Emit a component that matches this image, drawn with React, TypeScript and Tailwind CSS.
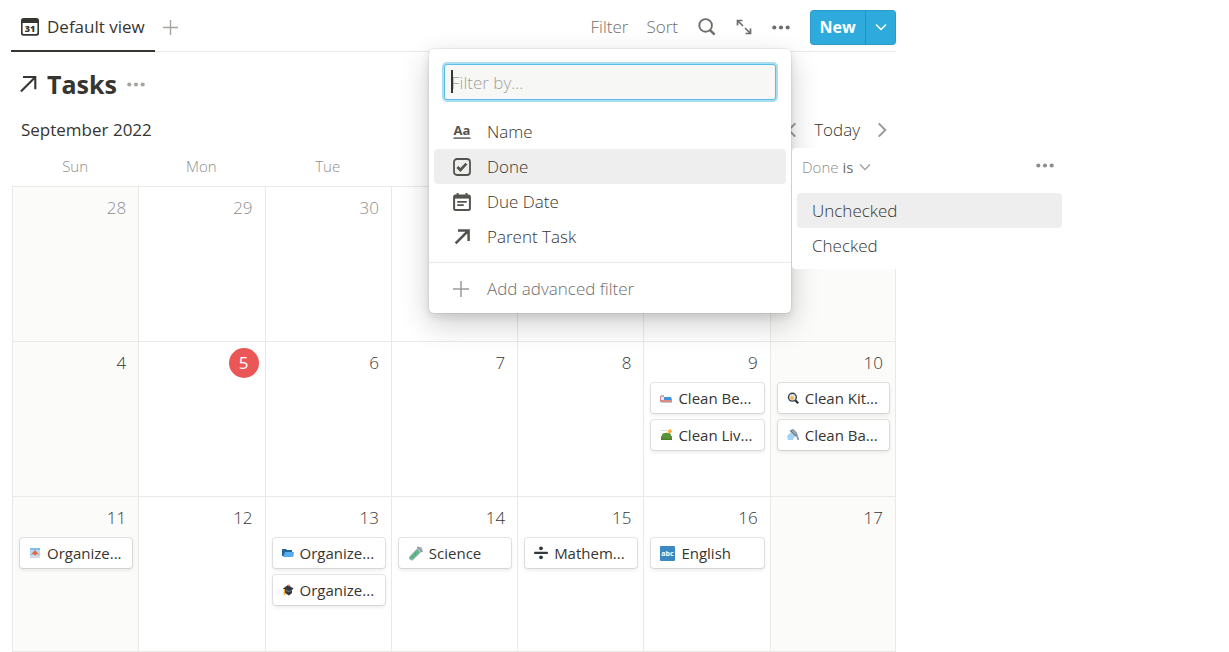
import React, { useState } from "react";

type IconProps = { className?: string };

const Dots: React.FC<IconProps> = ({ className }) => (
  <svg viewBox="0 0 18 5" className={className} fill="currentColor">
    <circle cx="2.3" cy="2.5" r="2.1" />
    <circle cx="9" cy="2.5" r="2.1" />
    <circle cx="15.7" cy="2.5" r="2.1" />
  </svg>
);

const Plus: React.FC<IconProps> = ({ className }) => (
  <svg viewBox="0 0 16 16" className={className} stroke="currentColor" strokeWidth="1.5">
    <path d="M8 0v16M0 8h16" />
  </svg>
);

const Chevron: React.FC<IconProps> = ({ className }) => (
  <svg viewBox="0 0 12 12" className={className} fill="none" stroke="currentColor" strokeWidth="1.5">
    <path d="M1 3.5l5 5 5-5" />
  </svg>
);

const Arrow: React.FC<IconProps> = ({ className }) => (
  <svg viewBox="0 0 18 18" className={className} fill="none" stroke="currentColor" strokeWidth="2.1">
    <path d="M3 2h12.300v12.300M14.900 2.400L.9 16.400" />
  </svg>
);

const RelationIcon: React.FC<IconProps> = ({ className }) => (
  <svg viewBox="0 0 18 18" className={className} fill="none" stroke="currentColor" strokeWidth="2.500">
    <path d="M5 2.400h10.600V13M15 3L2.600 15.400" />
  </svg>
);

const CalendarIcon: React.FC<IconProps> = ({ className }) => (
  <svg viewBox="0 0 18 18" className={className}>
    <path
      fill="currentColor"
      fillRule="evenodd"
      d="M2.500 0h13A2.500 2.500 0 0 1 18 2.500v12.700a2.500 2.500 0 0 1-2.500 2.500h-13A2.500 2.500 0 0 1 0 15.200V2.500A2.500 2.500 0 0 1 2.500 0zM1.600 5v9.600c0 .9.600 1.500 1.500 1.500h11.800c.9 0 1.500-.6 1.500-1.500V5z"
    />
    <text x="9" y="13.600" textAnchor="middle" fontSize="9" fontWeight="800" fill="currentColor">
      31
    </text>
  </svg>
);

const SearchIcon: React.FC<IconProps> = ({ className }) => (
  <svg viewBox="0 0 18 18" className={className} fill="none" stroke="currentColor">
    <circle cx="7.6" cy="7.400" r="6.300" strokeWidth="1.9" />
    <path d="M11.800 11.800l4.800 4.800" strokeWidth="2.400" />
  </svg>
);

const ExpandIcon: React.FC<IconProps> = ({ className }) => (
  <svg viewBox="0 0 16 16" className={className} fill="none" stroke="currentColor" strokeWidth="1.700">
    <path d="M1.500 6.500v-5h5M1.500 1.500L7 7M14.500 9.500v5h-5M14.500 14.500L9 9" />
  </svg>
);

const TitleIcon: React.FC<IconProps> = ({ className }) => (
  <svg viewBox="0 0 18 18" className={`overflow-visible ${className}`} fill="currentColor">
    <text x="9" y="12.400" textAnchor="middle" fontSize="13" fontWeight="700">
      Aa
    </text>
    <path d="M.5 14.400h17v1.400H.5z" />
  </svg>
);

const CheckboxIcon: React.FC<IconProps> = ({ className }) => (
  <svg viewBox="0 0 18 18" className={className} fill="none" stroke="currentColor">
    <rect x="1" y="1" width="16" height="16" rx="3" strokeWidth="1.800" />
    <path d="M4.400 9l3 3 6-6.400" strokeWidth="2.700" />
  </svg>
);

const DateIcon: React.FC<IconProps> = ({ className }) => (
  <svg viewBox="0 0 18 18" className={className} fill="none" stroke="currentColor">
    <rect x="1.100" y="2.400" width="15.800" height="14.600" rx="1.500" strokeWidth="2" />
    <path d="M1 3.800h16" strokeWidth="3.600" />
    <path d="M4.600 0v3M13.400 0v3" strokeWidth="2" />
    <path d="M4.200 8.800h9.600M4.200 12.200h6.600" strokeWidth="1.700" />
  </svg>
);

const emojis: Record<string, React.ReactNode> = {
  bed: (
    <svg viewBox="0 0 12 12" className="size-3">
      <path fill="#a9b8c4" d="M1 3h3v2H1z" />
      <path fill="#d98b84" d="M0 4h1v6H0zM1 8h11v2H1z" />
      <path fill="#e4e9ee" d="M1 5h4v3H1z" />
      <path fill="#3f93dc" d="M4 5h7l1 3H4z" />
      <path fill="#b0bcc8" d="M1 10h11v.8H1z" />
    </svg>
  ),
  couch: (
    <svg viewBox="0 0 12 12" className="size-3">
      <path fill="#cfe0ea" d="M1 1h6v1H1z" />
      <circle cx="9.800" cy="2.200" r="2" fill="#ffac33" />
      <path fill="#5c913b" d="M2 6c0-3 9-3 9 0v1h1v4H1V7h1z" />
      <path fill="#4b8029" d="M1 9.500h11v1.500H1z" />
    </svg>
  ),
  pan: (
    <svg viewBox="0 0 12 12" className="size-3">
      <path stroke="#292f33" strokeWidth="2.200" d="M8 8l3.200 3.200" />
      <circle cx="5.400" cy="5.200" r="4.600" fill="#3b4449" />
      <circle cx="5.400" cy="5.200" r="3.200" fill="#dfe4e8" />
      <circle cx="5" cy="6" r="1.700" fill="#ffac33" />
    </svg>
  ),
  shower: (
    <svg viewBox="0 0 12 12" className="size-3">
      <path fill="none" stroke="#8899a6" strokeWidth="1.800" d="M3 2l3-1 3 3 2.400 7" />
      <path fill="#a5d3f5" d="M4 3l4 4-2 4H1L0 7z" />
      <path stroke="#66757f" strokeWidth="1.600" d="M4 2l5 5" />
    </svg>
  ),
  picture: (
    <svg viewBox="0 0 12 12" className="size-3">
      <path fill="#b5dcf7" d="M1 1h10v10H1z" />
      <path fill="#7fbdf0" d="M1 1h10v2H1z" />
      <path fill="#e4673f" d="M6 3l4.500 5L8 7 6 8.500 4 7 1.500 8z" />
      <path fill="#d5dbe0" d="M1 9h10v2H1z" />
    </svg>
  ),
  folder: (
    <svg viewBox="0 0 12 12" className="size-3">
      <path fill="#226699" d="M0 2h4l1 1h5v6H0z" />
      <path fill="#55acee" d="M3 5h9l-.8 5H1z" />
    </svg>
  ),
  backpack: (
    <svg viewBox="0 0 12 12" className="size-3">
      <path fill="#31373d" d="M6 1l5.500 3.500L10 6v3l-3 2.500L3 9V6L1 4.500z" />
      <path fill="#66757f" d="M4 5.500l3 1.500 3-1.500v1L7 8.200 4 7z" />
      <path stroke="#ffac33" strokeWidth="1.400" d="M2.400 5v6" />
      <circle cx="7" cy="1.500" r=".9" fill="#dd6b75" />
    </svg>
  ),
  tube: (
    <svg viewBox="0 0 16 16" className="size-[15px]">
      <path stroke="#9aaab4" strokeWidth="5.600" strokeLinecap="round" d="M4 12.500l8.500-8.700" />
      <path stroke="#ccd6dd" strokeWidth="3.600" strokeLinecap="round" d="M4 12.500l8.500-8.700" />
      <path stroke="#5fb98a" strokeWidth="4" strokeLinecap="round" d="M4 12.500l6.200-6.300" />
      <path stroke="#8899a6" strokeWidth="1.800" strokeLinecap="round" d="M10.500 1.500l4.300 4.200" />
      <circle cx="5" cy="11" r=".7" fill="#3e8f67" />
      <circle cx="8" cy="8.500" r=".7" fill="#3e8f67" />
    </svg>
  ),
  divide: (
    <svg viewBox="0 0 14 14" className="size-3.5" fill="#31373d">
      <circle cx="7" cy="2.300" r="1.900" />
      <circle cx="7" cy="11.300" r="1.900" />
      <rect x="0" y="5.800" width="14" height="2.200" rx="1" />
    </svg>
  ),
  abc: (
    <svg viewBox="0 0 15 15" className="size-[15px]">
      <rect width="15" height="15" rx="1" fill="#3b88c3" />
      <text x="7.500" y="9.800" textAnchor="middle" fontSize="7" fontWeight="700" fill="#fff">
        abc
      </text>
    </svg>
  ),
};

type Task = { icon: string; title: string };
type Day = { date: number; muted?: boolean; today?: boolean; tasks?: Task[] };

const weeks: Day[][] = [
  [
    { date: 28, muted: true },
    { date: 29, muted: true },
    { date: 30, muted: true },
    { date: 31, muted: true },
    { date: 1 },
    { date: 2 },
    { date: 3 },
  ],
  [
    { date: 4 },
    { date: 5, today: true },
    { date: 6 },
    { date: 7 },
    { date: 8 },
    {
      date: 9,
      tasks: [
        { icon: "bed", title: "Clean Be..." },
        { icon: "couch", title: "Clean Liv..." },
      ],
    },
    {
      date: 10,
      tasks: [
        { icon: "pan", title: "Clean Kit..." },
        { icon: "shower", title: "Clean Ba..." },
      ],
    },
  ],
  [
    { date: 11, tasks: [{ icon: "picture", title: "Organize..." }] },
    { date: 12 },
    {
      date: 13,
      tasks: [
        { icon: "folder", title: "Organize..." },
        { icon: "backpack", title: "Organize..." },
      ],
    },
    { date: 14, tasks: [{ icon: "tube", title: "Science" }] },
    { date: 15, tasks: [{ icon: "divide", title: "Mathem..." }] },
    { date: 16, tasks: [{ icon: "abc", title: "English" }] },
    { date: 17 },
  ],
];

const properties = [
  { icon: TitleIcon, label: "Name" },
  { icon: CheckboxIcon, label: "Done" },
  { icon: DateIcon, label: "Due Date" },
  { icon: RelationIcon, label: "Parent Task" },
];

const TaskCard: React.FC<{ task: Task }> = ({ task }) => (
  <a
    href="#"
    className="flex h-[30px] items-center gap-1.5 rounded-[3px] bg-white pl-[9px] text-[15px] font-normal whitespace-nowrap shadow-[0_0_0_1px_rgba(15,15,15,0.1),0_2px_4px_rgba(15,15,15,0.1)]"
  >
    {emojis[task.icon]}
    {task.title}
  </a>
);

const DayCell: React.FC<{ day: Day; weekend: boolean }> = ({ day, weekend }) => (
  <td
    className={`h-[155px] border-t border-l border-[#e9e9e7] pr-[6px] pl-[7px] align-top last:border-r ${
      weekend ? "bg-[#fbfbfa]" : ""
    }`}
  >
    <div className="flex h-[41px] items-center justify-end font-light">
      {day.today ? (
        <span className="flex size-[30px] items-center justify-center rounded-full bg-[#eb5757] font-normal text-white">
          {day.date}
        </span>
      ) : (
        <span className={`pr-[6px] ${day.muted ? "text-[#8f8e8b]" : ""}`}>{day.date}</span>
      )}
    </div>
    <div className="flex flex-col gap-[7px]">
      {day.tasks?.map((task, i) => (
        <TaskCard key={i} task={task} />
      ))}
    </div>
  </td>
);

const FilterMenu: React.FC = () => {
  const [query, setQuery] = useState("");
  return (
    <div className="absolute top-[49px] right-[105px] w-[362px] rounded-[5px] bg-white pb-[7px] shadow-[0_0_0_1px_rgba(15,15,15,0.05),0_4px_8px_rgba(15,15,15,0.1),0_11px_30px_rgba(15,15,15,0.2)]">
      <div className="relative px-[15px] pt-[15px] pb-[14px]">
        <input
          type="text"
          aria-label="Filter by"
          placeholder="Filter by..."
          value={query}
          onChange={(e) => setQuery(e.target.value)}
          className="block h-9 w-full rounded-[3px] border border-[#5bbde4] bg-[#f7f7f5] px-[6px] font-light caret-transparent shadow-[0_0_0_2px_rgba(46,170,220,0.4)] outline-none placeholder:text-[#a3a29e]"
        />
        <span className="absolute top-[21px] left-[22px] h-[23px] w-[2px] bg-[#37352f]" />
      </div>
      <div className="px-[5px] pb-2">
        {properties.map((item) => (
          <button
            key={item.label}
            className={`flex h-[35px] w-full items-center gap-4 rounded-[4px] pt-px pl-[19px] font-light ${
              item.label === "Done" ? "bg-[#eeeeee]" : ""
            }`}
          >
            <item.icon className="size-[18px] text-[#55534e]" />
            {item.label}
          </button>
        ))}
      </div>
      <div className="border-t border-[#e9e9e7] px-[5px] pt-2">
        <button className="flex h-[35px] w-full items-center gap-[18px] pl-[19px] font-light text-[#6f6e6a]">
          <Plus className="size-4 text-[#9b9a97]" />
          Add advanced filter
        </button>
      </div>

      <div className="absolute top-[99px] left-full ml-px w-[275px] rounded-[4px] bg-white px-[5px] pb-1.5">
        <div className="flex h-[45px] items-start justify-between pt-2 pr-2 pl-[5px] text-[15px] leading-[22px] text-[#8f8e8b]">
          <button className="flex items-center gap-1 font-light">
            Done
            <span className="font-normal text-[#6f6e6a]">is</span>
            <Chevron className="ml-[2px] size-3 text-[#a5a4a1]" />
          </button>
          <button aria-label="Filter options" className="pt-[7px]">
            <Dots className="h-[5px] w-[18px]" />
          </button>
        </div>
        {["Unchecked", "Checked"].map((label) => (
          <button
            key={label}
            className={`flex h-[35px] w-full items-center rounded-[4px] pt-px pl-[15px] font-light ${
              label === "Unchecked" ? "bg-[#eeeeee]" : ""
            }`}
          >
            {label}
          </button>
        ))}
      </div>
    </div>
  );
};

const App: React.FC = () => {
  return (
    <div className="bg-white pr-[333px] pl-[11px] font-['Open_Sans','Noto_Sans',sans-serif] text-[17px] leading-6 text-[#37352f]">
      <main className="relative">
        <header className="flex h-[52px] justify-between border-b border-[#e9e9e7]">
          <div className="flex">
            <button className="-mb-px flex h-[52px] w-36 items-center gap-2 border-b-2 border-[#37352f] pt-1 pl-[10px] font-normal whitespace-nowrap">
              <CalendarIcon className="size-[18px] shrink-0" />
              Default view
            </button>
            <button aria-label="Add view" className="pt-[3px] pl-2 text-[#a5a4a1]">
              <Plus className="size-[15px]" />
            </button>
          </div>
          <div className="flex items-center gap-5 pt-[3px] font-light text-[#6f6e6a]">
            <div className="flex gap-[18px]">
              <button>Filter</button>
              <button>Sort</button>
            </div>
            <button aria-label="Search">
              <SearchIcon className="size-[18px]" />
            </button>
            <button aria-label="Expand">
              <ExpandIcon className="size-4" />
            </button>
            <button aria-label="More">
              <Dots className="h-[5px] w-[18px]" />
            </button>
            <div className="flex h-[35px] rounded-[4px] bg-[#2eaadc] text-white shadow-[inset_0_0_0_1px_rgba(15,15,15,0.1)]">
              <button className="w-14 border-r border-[#2490bd] text-[16px] font-bold">New</button>
              <button aria-label="New options" className="flex w-[30px] items-center justify-center">
                <Chevron className="size-3" />
              </button>
            </div>
          </div>
        </header>

        <div className="flex h-[61px] items-center pt-[3px] pl-[9px]">
          <Arrow className="size-[18px]" />
          <h1 className="pl-[9px] text-[25px] leading-8 font-bold">Tasks</h1>
          <button aria-label="Database options" className="pl-2.5 text-[#a5a4a1]">
            <Dots className="h-[5px] w-[18px]" />
          </button>
        </div>

        <div className="flex h-[34px] items-center justify-between pr-[6px] pl-[10px]">
          <h2 className="text-[17px] font-medium">September 2022</h2>
          <div className="flex items-center gap-[14px]">
            <button aria-label="Previous month" className="text-[#9b9a97]">
              <Chevron className="size-4 rotate-90" />
            </button>
            <button className="font-light">Today</button>
            <button aria-label="Next month" className="text-[#9b9a97]">
              <Chevron className="size-4 -rotate-90" />
            </button>
          </div>
        </div>

        <div className="pl-px">
          <table className="w-full table-fixed border-separate border-spacing-0 border-b border-[#e9e9e7]">
            <thead>
              <tr>
                {["Sun", "Mon", "Tue", "Wed", "Thu", "Fri", "Sat"].map((name) => (
                  <th key={name} className="h-[39px] pb-px text-[15px] font-light text-[#8f8e8b]">
                    {name}
                  </th>
                ))}
              </tr>
            </thead>
            <tbody>
              {weeks.map((week, i) => (
                <tr key={i}>
                  {week.map((day, j) => (
                    <DayCell key={day.date} day={day} weekend={j === 0 || j === 6} />
                  ))}
                </tr>
              ))}
            </tbody>
          </table>
        </div>

        <FilterMenu />
      </main>
    </div>
  );
};

export default App;
